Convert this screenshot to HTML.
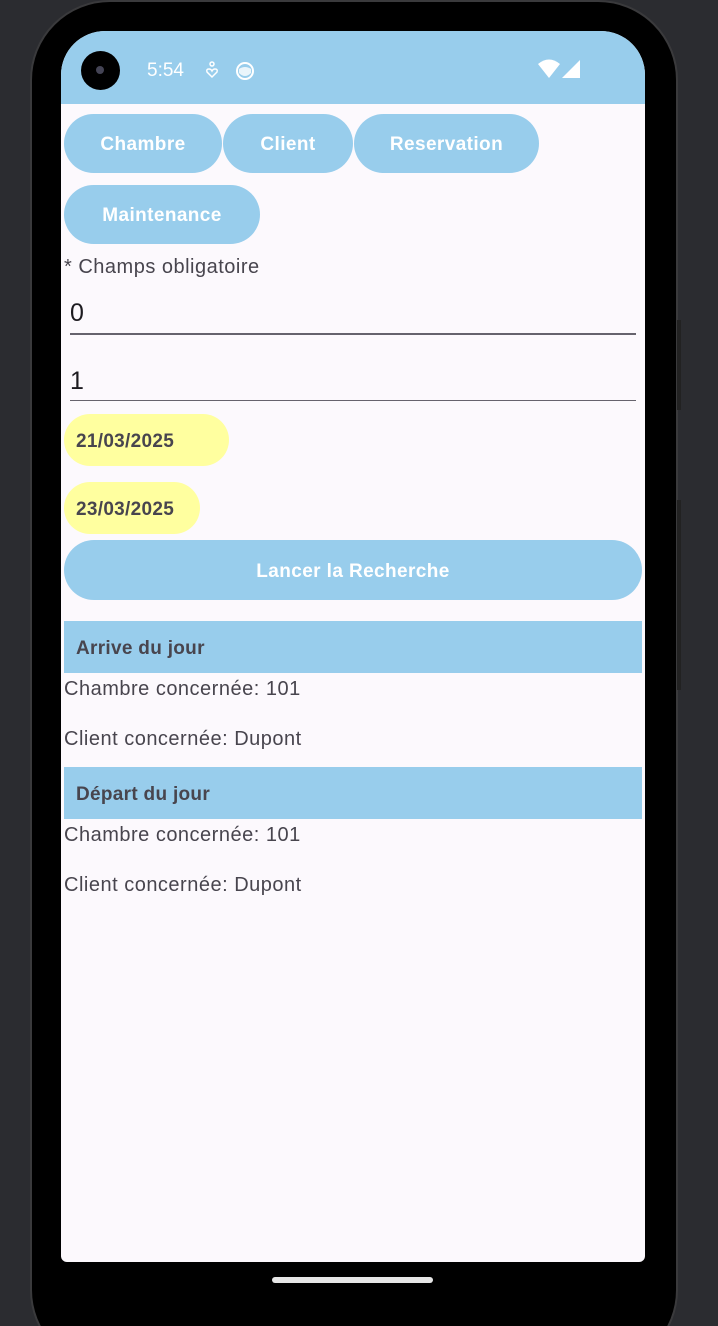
<!DOCTYPE html>
<html><head><meta charset="utf-8"><style>
*{margin:0;padding:0;box-sizing:border-box}
html,body{width:718px;height:1326px;overflow:hidden}
body{background:#2b2c30;position:relative;font-family:"Liberation Sans",sans-serif}
.phone{position:absolute;left:30px;top:0;width:648px;height:1370px;background:#000;border-radius:80px;border:2px solid #3a3a3c}
.screen{position:absolute;left:61px;top:31px;width:584px;height:1231px;background:#fcf9fd;border-radius:44px 44px 6px 6px;overflow:hidden}
.status{position:absolute;left:0;top:0;width:584px;height:73px;background:#98cdec}
.cam{position:absolute;left:20px;top:20px;width:39px;height:39px;border-radius:50%;background:#000}
.cam:after{content:"";position:absolute;left:15px;top:15px;width:8px;height:8px;border-radius:50%;background:#445}
.time{position:absolute;left:86px;top:29px;color:#fff;font-size:19px}
.btn{position:absolute;background:#98cdec;color:#fff;font-weight:bold;font-size:19px;letter-spacing:0.4px;border-radius:30px;display:flex;align-items:center;justify-content:center;padding-top:3px}
.t{position:absolute;color:#48454e;font-size:20px;letter-spacing:0.5px}
.date{position:absolute;left:3px;background:#ffff9f;color:#48454e;font-weight:bold;font-size:19px;letter-spacing:0.3px;border-radius:26px;height:52px;display:flex;align-items:center;padding-left:12px;padding-top:3px}
.line{position:absolute;left:9px;width:566px;background:#66636d}
.hdr{position:absolute;left:3px;width:578px;height:52px;background:#98cdec;color:#48454e;font-weight:bold;font-size:19px;letter-spacing:0.3px;display:flex;align-items:center;padding-left:12px;padding-top:3px}
</style></head><body>
<div class="phone"></div>
<div style="position:absolute;left:677px;top:320px;width:4px;height:90px;background:#222"></div>
<div style="position:absolute;left:677px;top:500px;width:4px;height:190px;background:#222"></div>
<div class="screen">
 <div class="status">
  <div class="cam"></div>
  <div class="time">5:54</div>
  <svg style="position:absolute;left:144px;top:30px" width="14" height="18" viewBox="0 0 14 18"><circle cx="7" cy="3" r="2" fill="none" stroke="#fff" stroke-width="1.5"/><path d="M7 16 L2 11 Q1 8 4 8 Q6 8 7 10 Q8 8 10 8 Q13 8 12 11Z" fill="none" stroke="#fff" stroke-width="1.5"/></svg>
  <svg style="position:absolute;left:174px;top:30px" width="20" height="20"><circle cx="10" cy="10" r="8" fill="none" stroke="#fff" stroke-width="2"/><path d="M4 8 Q10 4 16 8 L16 12 Q10 18 4 12Z" fill="#fff" opacity=".8"/></svg>
  <svg style="position:absolute;left:477px;top:28px" width="44" height="20"><path d="M0 5 Q11 -4 22 5 L11 19Z" fill="#fff"/><path d="M24 19 L42 1 L42 19Z" fill="#fff"/></svg>
 </div>
 <div class="btn" style="left:3px;top:83px;width:158px;height:59px">Chambre</div>
 <div class="btn" style="left:162px;top:83px;width:130px;height:59px">Client</div>
 <div class="btn" style="left:293px;top:83px;width:185px;height:59px">Reservation</div>
 <div class="btn" style="left:3px;top:154px;width:196px;height:59px">Maintenance</div>
 <div class="t" style="left:3px;top:225px">* Champs obligatoire</div>
 <div class="t" style="left:9px;top:268px;font-size:25px;color:#1d1b20">0</div>
 <div class="line" style="top:302px;height:2px"></div>
 <div class="t" style="left:9px;top:336px;font-size:25px;color:#1d1b20">1</div>
 <div class="line" style="top:369px;height:1px"></div>
 <div class="date" style="top:383px;width:165px">21/03/2025</div>
 <div class="date" style="top:451px;width:136px">23/03/2025</div>
 <div class="btn" style="left:3px;top:509px;width:578px;height:60px">Lancer la Recherche</div>
 <div class="hdr" style="top:590px">Arrive du jour</div>
 <div class="t" style="left:3px;top:647px">Chambre concernée: 101</div>
 <div class="t" style="left:3px;top:697px">Client concernée: Dupont</div>
 <div class="hdr" style="top:736px">Départ du jour</div>
 <div class="t" style="left:3px;top:793px">Chambre concernée: 101</div>
 <div class="t" style="left:3px;top:843px">Client concernée: Dupont</div>
</div>
<div style="position:absolute;left:272px;top:1277px;width:161px;height:6px;border-radius:3px;background:#e6e6e6"></div>
</body></html>
